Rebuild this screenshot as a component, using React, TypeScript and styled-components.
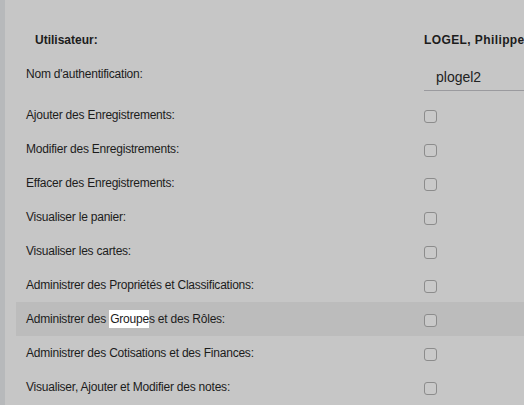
import React from 'react'
import styled, { createGlobalStyle } from 'styled-components'

const GlobalStyle = createGlobalStyle`
  html, body {
    margin: 0;
    padding: 0;
    background: #c6c6c6;
  }
  body {
    font-family: "Liberation Sans", Arial, sans-serif;
    font-size: 12px;
    color: #1c1c1c;
  }
`

const Page = styled.div`
  min-height: 405px;
  border-left: 5px solid #b7b9bb;
  padding: 23px 0 0 11px;
  box-sizing: border-box;
  overflow: hidden;
`

const Row = styled.div<{ $hover?: boolean; $height?: number }>`
  display: grid;
  grid-template-columns: 408px 1fr;
  align-items: center;
  height: ${({ $height }) => $height || 34}px;
  background: ${({ $hover }) => ($hover ? '#bcbcbc' : 'transparent')};
`

const Label = styled.div<{ $bold?: boolean; $shift?: number }>`
  padding-left: ${({ $bold }) => ($bold ? 19 : 10)}px;
  font-weight: ${({ $bold }) => ($bold ? 700 : 400)};
  letter-spacing: ${({ $bold }) => ($bold ? '0' : '-0.22px')};
  white-space: nowrap;
  transform: translateY(${({ $shift }) => $shift || 0}px);
`

const Value = styled.div`
  white-space: nowrap;
  font-weight: 700;
  letter-spacing: 0.4px;
`

const TextInput = styled.input`
  box-sizing: border-box;
  width: 100%;
  height: 26px;
  margin: 0;
  border: none;
  border-bottom: 1px solid #9a9a9e;
  background: transparent;
  font-family: "Liberation Sans", Arial, sans-serif;
  font-size: 14px;
  color: #222;
  padding: 0 0 0 12px;
  outline: none;
`

const Check = styled.input.attrs({ type: 'checkbox' })`
  appearance: none;
  margin: 0;
  width: 13px;
  height: 13px;
  border: 1px solid #8c8c8c;
  border-radius: 3px;
  background: #c9c9c9;
  box-sizing: border-box;
  display: block;
  transform: translateY(1px);
`

const Selected = styled.span`
  background: #ffffff;
  padding: 2px 0 2px 1px;
`

const perms = [
  'Ajouter des Enregistrements:',
  'Modifier des Enregistrements:',
  'Effacer des Enregistrements:',
  'Visualiser le panier:',
  'Visualiser les cartes:',
  'Administrer des Propriétés et Classifications:',
  'GROUPES',
  'Administrer des Cotisations et des Finances:',
  'Visualiser, Ajouter et Modifier des notes:',
]

export default function App() {
  return (
    <>
      <GlobalStyle />
      <Page>
        <Row>
          <Label $bold>Utilisateur:</Label>
          <Value>LOGEL, Philippe</Value>
        </Row>
        <Row $height={41}>
          <Label $shift={-4}>Nom d'authentification:</Label>
          <TextInput defaultValue="plogel2" />
        </Row>
        {perms.map((p) =>
          p === 'GROUPES' ? (
            <Row key={p} $hover>
              <Label>
                Administrer des <Selected>Groupe</Selected>s et des Rôles:
              </Label>
              <Check />
            </Row>
          ) : (
            <Row key={p}>
              <Label>{p}</Label>
              <Check />
            </Row>
          )
        )}
      </Page>
    </>
  )
}
